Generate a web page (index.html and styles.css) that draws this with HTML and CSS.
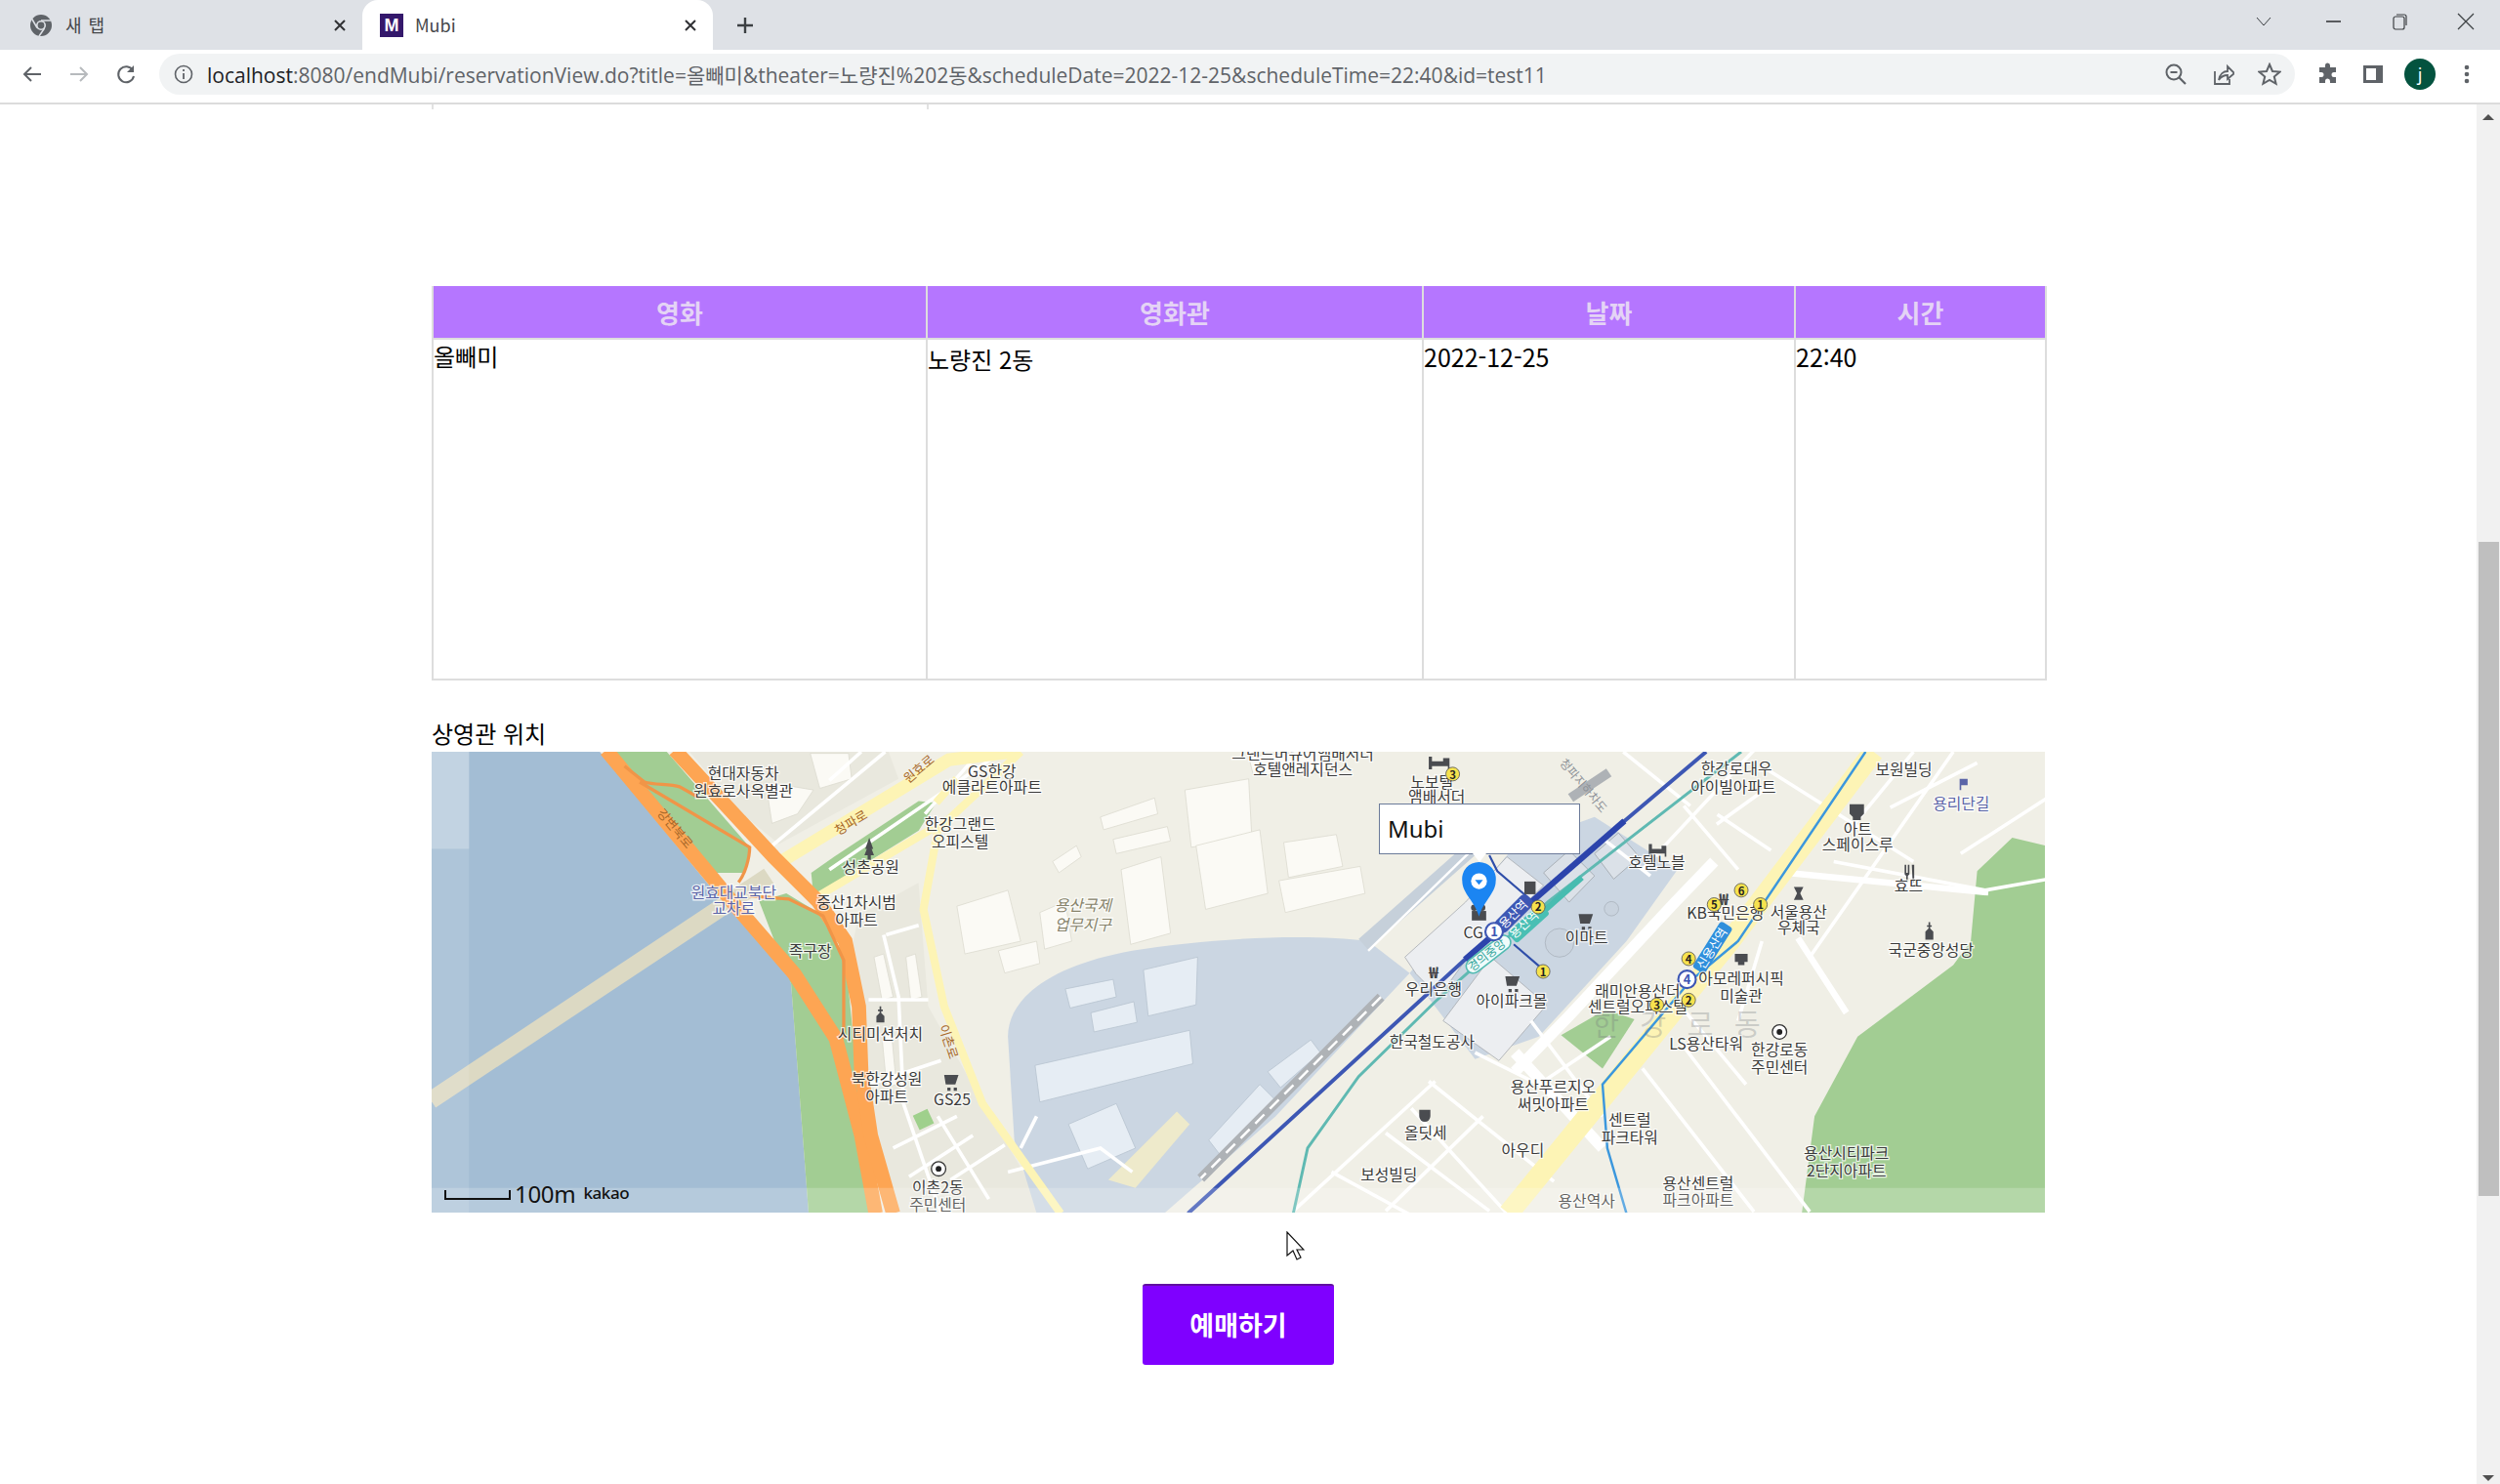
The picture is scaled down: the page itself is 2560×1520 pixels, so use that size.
FILE: index.html
```html
<!DOCTYPE html>
<html lang="ko">
<head>
<meta charset="utf-8">
<title>Mubi</title>
<link rel="stylesheet" href="styles.css">
</head>
<body>
<div class="browser">
  <header class="tabstrip">
    <div class="tab">
      <svg class="favicon" viewBox="0 0 24 24"><circle cx="12" cy="12" r="11" fill="#5f6368"/><circle cx="12" cy="12" r="5" fill="#dee1e6"/><circle cx="12" cy="12" r="3.400" fill="#5f6368"/><path d="M12 7h10M8 14.500 2.800 5.500M15.500 15 10 23" stroke="#dee1e6" stroke-width="1.500" fill="none"/></svg>
      <span class="tab-title tab-title-wide">새 탭</span>
      <svg class="tab-x" viewBox="0 0 14 14"><path d="M2 2l10 10M12 2 2 12" stroke="#303134" stroke-width="2"/></svg>
    </div>
    <div class="tab tab-active">
      <span class="mubi-icon">M</span>
      <span class="tab-title">Mubi</span>
      <svg class="tab-x" viewBox="0 0 14 14"><path d="M2 2l10 10M12 2 2 12" stroke="#303134" stroke-width="2"/></svg>
    </div>
    <svg class="new-tab" viewBox="0 0 20 20"><path d="M10 2v16M2 10h16" stroke="#3c4043" stroke-width="2.400"/></svg>
    <div class="win-controls">
      <svg class="win-btn win-chevron" viewBox="0 0 20 20"><path d="M3 6l7 8 7-8" stroke="#3c4043" fill="none"/></svg>
      <svg class="win-btn" viewBox="0 0 20 20"><path d="M3 10h15" stroke="#202124" stroke-width="1.400"/></svg>
      <svg class="win-btn" viewBox="0 0 20 20"><rect x="4" y="5" width="11" height="13" rx="2" fill="none" stroke="#3c4043" stroke-width="1.200"/><path d="M7 3h8a2 2 0 0 1 2 2v9" fill="none" stroke="#3c4043" stroke-width="1.200"/></svg>
      <svg class="win-btn" viewBox="0 0 20 20"><path d="M2 2l16 16M18 2 2 18" stroke="#3c4043" stroke-width="1.200"/></svg>
    </div>
  </header>
  <nav class="toolbar">
    <svg class="nav-btn" viewBox="0 0 24 24"><path d="M21 12H4M11 5l-7 7 7 7" stroke="#5f6368" stroke-width="2" fill="none"/></svg>
    <svg class="nav-btn" viewBox="0 0 24 24"><path d="M3 12h17M13 5l7 7-7 7" stroke="#b7babd" stroke-width="2" fill="none"/></svg>
    <svg class="nav-btn" viewBox="0 0 24 24"><path d="M19 8a8 8 0 1 0 1 6" stroke="#5f6368" stroke-width="2" fill="none"/><path d="M20 3v7h-7z" fill="#5f6368"/></svg>
    <div class="omnibox">
      <svg class="info-icon" viewBox="0 0 20 20"><circle cx="10" cy="10" r="8.500" fill="none" stroke="#5f6368" stroke-width="1.600"/><path d="M10 9v6M10 5v2" stroke="#5f6368" stroke-width="1.800"/></svg>
      <span class="url"><b class="url-host">localhost</b>:8080/endMubi/reservationView.do?title=올빼미&amp;theater=노량진%202동&amp;scheduleDate=2022-12-25&amp;scheduleTime=22:40&amp;id=test11</span>
      <div class="omni-actions">
        <svg class="omni-btn" viewBox="0 0 24 24"><circle cx="10" cy="10" r="7.500" fill="none" stroke="#5f6368" stroke-width="2"/><path d="M6.500 10h7M15.500 15.500 22 22" stroke="#5f6368" stroke-width="2.200"/></svg>
        <svg class="omni-btn" viewBox="0 0 24 24"><path d="M4 9v13h15v-5M8 18c1-6 5-9 9-9V4l7 7-7 6v-4c-4 0-7 2-9 5z" fill="none" stroke="#5f6368" stroke-width="1.800"/></svg>
        <svg class="omni-btn" viewBox="0 0 24 24"><path d="M12 2l3 7 7.500.6-5.700 4.900 1.800 7.300L12 18l-6.600 3.800 1.800-7.300L1.500 9.600 9 9z" fill="none" stroke="#5f6368" stroke-width="2"/></svg>
      </div>
    </div>
    <div class="tool-actions">
      <svg class="nav-btn" viewBox="0 0 24 24"><path d="M9 3a2.500 2.500 0 0 1 5 0v2h6v5h-2a2.500 2.500 0 0 0 0 5h2v6h-6v-2a2.500 2.500 0 0 0-5 0v2H3v-6h2a2.500 2.500 0 0 0 0-5H3V5h6z" fill="#5f6368"/></svg>
      <svg class="nav-btn" viewBox="0 0 24 24"><rect x="2" y="3" width="20" height="18" fill="#5f6368"/><rect x="5" y="6" width="10" height="12" fill="#fff"/></svg>
      <span class="avatar">j</span>
      <svg class="nav-btn" viewBox="0 0 24 24"><circle cx="12" cy="5" r="2.300" fill="#5f6368"/><circle cx="12" cy="12" r="2.300" fill="#5f6368"/><circle cx="12" cy="19" r="2.300" fill="#5f6368"/></svg>
    </div>
  </nav>
  <div class="viewport">
    <main class="page">
      <div class="content">
        <div class="scrolled-table"><span></span><span></span></div>
        <table class="summary">
          <thead>
            <tr><th class="c1">영화</th><th class="c2">영화관</th><th class="c3">날짜</th><th class="c4">시간</th></tr>
          </thead>
          <tbody>
            <tr><td>올빼미</td><td class="low">노량진 2동</td><td class="num">2022-12-25</td><td class="num">22:40</td></tr>
          </tbody>
        </table>
        <p class="map-title">상영관 위치</p>
        <div class="map">
          <svg class="map-svg" viewBox="270.500 471 1012 289.500" preserveAspectRatio="none">
            <rect class="land" x="270" y="471" width="1013" height="290"/>
            <!-- water -->
            <path class="water" d="M270 471H376L457 570 494 610 496 617 507 761H270z"/>
            <!-- built-up blocks -->
            <polygon class="block" points="432,470.600 557,470.600 563.400,488 488.400,529 463.400,508.400"/>
            <polygon class="block" points="538.400,573.700 575.900,553.300 582,631 616.500,692 657,761 557,761 538.400,671.700 535,590"/>
            <!-- parks -->
            <path class="park" d="M385 471H418L470 531 467 547H447z"/>
            <path class="park" d="M476 565 493 560 513 572 530 600 535 650 540 710 546 761H507L496 617z"/>
            <path class="park" d="M508.600 547 523 537 576 502 587 503 576 520.500 510 561.500z"/>
            <path class="park" d="M1283 530 1262 525 1240 546 1236 590 1225 605 1165 650 1138 700 1130 761H1283z"/>
            <path class="park" d="M979 649 1007 633 1025 639 1005 670z"/>
            <rect class="bld-green" x="574" y="697" width="10" height="10" transform="rotate(-25 579 702)"/>
            <rect class="bld-green" x="702" y="730" width="12" height="10" transform="rotate(-35 708 735)"/>
            <!-- railyard -->
            <path class="yard" d="M632 650C632 625 660 605 710 596 760 588 820 585 858 590L884 610 800 700 730 761H650L636 715z"/>
            <path class="yard" d="M884 610 950 530 1000 512 1052 545 1020 590 965 650 925 664z"/>
            <path class="track-band" d="M925 530 855 592"/>
            <path class="track-edge" d="M932 524 858 596"/>
            <!-- station complex -->
            <polygon class="complex" points="881,600 919,565.500 945,537 968,555 947,576 919,602 902.400,625 888,610.500"/>
            <polygon class="complex" points="905,640 935,600 970,630 940,665"/>
            <polygon class="complex-dark" points="968,547 984,533 1000,549 984,565.500"/>
            <polygon class="complex-dark" points="1000,535 1015,522 1028,537 1012,551"/>
            <circle class="complex-round" cx="978" cy="591" r="9"/>
            <circle class="complex-round" cx="1010.600" cy="569.600" r="4.500"/>
            <!-- buildings -->
            <g class="bld">
              <polygon points="743,495 783,488 785,525 747,531"/>
              <polygon points="750,530 790,520 795,560 756,570"/>
              <polygon points="703,545 728,537 734,585 709,592"/>
              <polygon points="805,528 838,523 842,543 808,550"/>
              <polygon points="802,552 853,543 856,560 806,572"/>
              <polygon points="600,568 632,558 640,590 605,598"/>
              <polygon points="626,596 650,590 652,604 630,610"/>
              <polygon points="690,512 724,500 726,510 692,520"/>
              <polygon points="698,526 732,518 734,527 700,535"/>
              <polygon points="783,474 830,470 832,484 786,486"/>
              <polygon points="660,540 675,530 678,537 664,547"/>
              <polygon points="652,572 668,565 672,590 655,595"/>
              <polygon points="508,472 532,472 534,488 514,494"/>
              <polygon points="480,490 510,495 500,510 484,516"/>
              <polygon points="548,600 554,598 560,625 553,627"/>
              <polygon points="568,600 574,598 578,625 571,627"/>
              <polygon points="553,650 559,648 562,680 556,682"/>
            </g>
            <g class="bld-yard">
              <polygon points="668,620 698,614 700,625 671,632"/>
              <polygon points="717,608 751,600 750,630 720,637"/>
              <polygon points="684,635 711,628 713,641 686,647"/>
              <polygon points="649,668 746,646 748,667 652,691"/>
              <polygon points="670,705 700,692 712,720 682,733"/>
              <polygon points="758,715 790,680 800,690 768,728"/>
              <polygon points="795,672 822,652 828,660 803,682"/>
            </g>
            <polygon class="tan" points="695,740 738,697 746,705 712,745"/>
            <!-- streets -->
            <g class="street">
              <path d="M555 471 478 535M628 471 520 545M540 471 520 489M580 510 610 476"/>
              <path d="M554 586 563.400 625 566.500 692 590 761M544.600 626.800H582M555.600 586 576 580"/>
              <path d="M545 680 590 665M588 700 620 752M560 720 600 700M570 738 610 712M596 740 630 718"/>
              <path d="M632 735 690 720 710 735M640 720 650 700"/>
              <path d="M1018 471 1060 505M1004.500 525 1035 549"/>
              <path d="M925 660 965 680 1010 650M960 640 1005 700"/>
              <path d="M896 678 974.500 741M869 710.500 934 759.500M900 678 811 759.500M930 700 869 759.500M835 735 890 765M885 695 945 761"/>
              <path d="M1077 510.400 1110.600 533M1110.600 492 1076.600 516.500M1175 478 1134.400 527M1100 470 1030 545M1056 505 1090 545"/>
              <path d="M1240 478 1185.500 506M1284 500 1229.700 535M1150 540 1245 558 1290 550M1225 471 1135 600"/>
              <path d="M1105 480 1200 540M1200 471 1160 520M1105 590 1090 640"/>
              <path d="M1055 655 1135 760M1045 620 1095 680M1030 670 1100 760"/>
            </g>
            <g class="street-wide">
              <path d="M1075 540 1050 566 984 637 950 672M950 660 1005 720"/>
              <path class="street-mid" d="M1120.800 547 1247 559.400M1127.600 588 1158 635"/>
            </g>
            <!-- rails -->
            <path class="rail-grey" d="M1009 484 985 500M866 625 753 739"/>
            <path class="rail-dash" d="M866 625 753 739"/>
            <!-- arterial yellow -->
            <path class="yellow" d="M640 471 588 520 579 570 592 631 616 692 665 761"/>
            <path class="yellow" d="M510 563.500 585 519M587 503 600 488"/>
            <path class="yellow-wide" d="M1175 471 1085 590 1020 670 946 761"/>
            <path class="bridge" d="M270 690 482 549"/>
            <path class="yellow-mid" d="M488 541 595 476 636 471"/>
            <!-- orange -->
            <path class="orange" d="M380 470 463 570 498 610.500 524 651 540 712 549 761"/>
            <path class="orange" d="M423 470 485 537 513 565 530 590 538.500 631 540 672 546 712 560 761"/>
            <path class="orange-thin" d="M391.500 480 404 490C410 492 420 491 426 493L438.500 500M401 490 470 531C470 538 467 548 463 553"/>
            <path class="orange-thin" d="M470 561.500 494.500 563.500 516 574 529 602V651"/>
            <!-- transit -->
            <path class="line-blue" d="M1070 471 1018.700 514.500 918.700 601.500 745 761"/>
            <path class="line-blue-strong" d="M1018.700 514.500 918.700 601.500"/>
            <path class="line-teal" d="M1092 471 971 565 900 628 852 675 820 720 811 761"/>
            <path class="line-teal-strong" d="M992 550 958 580"/>
            <path class="line-sub" d="M1170 471 1090 590 1060 615 1005 680 1008 720 1020 761"/>
            <path class="line-exit" d="M934 536 939 546 961.600 565.500M949.300 592 965.600 606"/>
            <!-- station labels -->
            <rect class="pill-teal-solid" x="-14" y="-4.500" width="28" height="9" rx="2" transform="translate(958.600 578.800) rotate(-42)"/>
            <text class="pill-text" transform="translate(957.500 581.500) rotate(-42)">용산역</text>
            <rect class="pill-blue" x="-14" y="-4.800" width="28" height="9.600" rx="3" transform="translate(949.400 572.700) rotate(-45)"/>
            <text class="pill-text" transform="translate(951 575) rotate(-45)">용산역</text>
            <rect class="pill-teal" x="-16.500" y="-4.500" width="33" height="9" rx="4.500" transform="translate(933.400 598.200) rotate(-38)"/>
            <text class="pill-text-teal" transform="translate(934 600.800) rotate(-38)">경의중앙</text>
            <rect class="pill-sky" x="-17" y="-4.500" width="34" height="9" rx="2" transform="translate(1074 594) rotate(-58)"/>
            <text class="pill-text" transform="translate(1076 596) rotate(-58)">신용산역</text>
            <circle class="badge-ring" cx="937" cy="584" r="5.500"/><text class="badge-line" x="937" y="587">1</text>
            <circle class="badge-ring" cx="1058" cy="614" r="5.500"/><text class="badge-line" x="1058" y="617">4</text>
            <!-- POI glyphs -->
            <g class="poi">
              <path d="M896 474h2v3h7v-2h4v7h-1v-2h-10v2h-2z"/>
              <path d="M1034 529h2v3h6v-2h3v7h-1v-2h-8v2h-2z"/>
              <path d="M1160 504h9v6l-2 2v2h-5v-2l-2-2z"/>
              <path d="M1194.500 542h1v5h1v-5h1v6l-1 1v4h-1v-4l-1-1zM1199 542h1.500v11h-1z"/>
              <path d="M1125 556h6l-2 4 2 4h-6l2-4z"/>
              <path d="M1209.500 578h1v2h1v1h-1v1l2 2v5h-5v-5l2-2v-1h-1v-1h1z"/>
              <path d="M1088 598h8v5h-2v2h-4v-2h-2z"/>
              <path d="M890 696h7v4a3 3 0 0 1-7 0z"/>
              <path d="M551.500 631h1v2h1v1h-1v1l2 2v4h-5v-4l2-2v-1h-1v-1h1z"/>
              <path d="M545 525l2.500 7h-1l1.500 4h-2v3h-2v-3h-2l1.500-4h-1z"/>
              <path d="M592 674h9l-2 6h-6zM594 682h2v2h-2zM598 682h2v2h-2z"/>
              <path d="M990 573h9l-2 6h-6zM992 581h2v2h-2zM996 581h2v2h-2z"/>
              <path d="M944 612h9l-2 6h-6zM946 620h2v2h-2zM950 620h2v2h-2z"/>
              <path d="M923 571h9v6h-9z"/>
              <circle cx="924.500" cy="569" r="2"/><circle cx="929.500" cy="569" r="2"/>
              <path d="M956 552.500h7v8h-7z"/>
            </g>
            <text class="won" x="899" y="613">₩</text>
            <text class="won" x="1081" y="567">₩</text>
            <circle class="target" cx="588.500" cy="733" r="4.500"/><circle class="target-dot" cx="588.500" cy="733" r="1.800"/>
            <circle class="target" cx="1116" cy="647" r="4.500"/><circle class="target-dot" cx="1116" cy="647" r="1.800"/>
            <!-- road names -->
            <text class="road-name" transform="translate(421 521) rotate(50)">강변북로</text>
            <text class="road-name" transform="translate(535 518) rotate(-31)">청파로</text>
            <text class="road-name" transform="translate(578 484) rotate(-40)">원효로</text>
            <text class="road-name" transform="translate(592 654) rotate(72)">이촌로</text>
            <text class="rail-name" transform="translate(991 494) rotate(50)">청파지하차도</text>
            <!-- labels -->
            <text class="lbl-dong" x="1058" y="649">한강로동</text>
            <g class="lbl">
              <text x="466" y="488">현대자동차</text><text x="466" y="499">원효로사옥별관</text>
              <text x="622" y="487">GS한강</text><text x="622" y="497">에클라트아파트</text>
              <text x="602" y="520">한강그랜드</text><text x="602" y="531">오피스텔</text>
              <text x="546" y="547">성촌공원</text>
              <text x="537" y="569">중산1차시범</text><text x="537" y="580">아파트</text>
              <text x="508" y="600">족구장</text>
              <text x="552" y="652">시티미션처치</text>
              <text x="556" y="680">북한강성원</text><text x="556" y="691">아파트</text>
              <text x="597" y="693">GS25</text>
              <text x="588" y="748">이촌2동</text><text x="588" y="759">주민센터</text>
              <text x="817" y="476">그랜드머큐어앰배서더</text><text x="817" y="486">호텔앤레지던스</text>
              <text x="898" y="494">노보텔</text><text x="901" y="503">앰배서더</text>
              <text x="1089" y="485">한강로대우</text><text x="1087" y="497">아이빌아파트</text>
              <text x="1194" y="486">보원빌딩</text>
              <text x="1165" y="523">아트</text><text x="1165" y="533">스페이스루</text>
              <text x="1039" y="544">호텔노블</text>
              <text x="1197" y="559">효뜨</text>
              <text x="1128" y="575">서울용산</text><text x="1128" y="585">우체국</text>
              <text x="1082" y="576">KB국민은행</text>
              <text x="1211" y="599">국군중앙성당</text>
              <text x="995" y="591">이마트</text>
              <text x="924" y="588">CG</text>
              <text x="899" y="624">우리은행</text>
              <text x="948" y="631">아이파크몰</text>
              <text x="1027" y="625">래미안용산더</text><text x="1027" y="635">센트럴오피스텔</text>
              <text x="1092" y="617">아모레퍼시픽</text><text x="1092" y="628">미술관</text>
              <text x="1070" y="658">LS용산타워</text>
              <text x="1116" y="662">한강로동</text><text x="1116" y="673">주민센터</text>
              <text x="898" y="657">한국철도공사</text>
              <text x="974" y="685">용산푸르지오</text><text x="974" y="696">써밋아파트</text>
              <text x="1022" y="706">센트럴</text><text x="1022" y="717">파크타워</text>
              <text x="894" y="714">올딧세</text>
              <text x="955" y="725">아우디</text>
              <text x="871" y="740">보성빌딩</text>
              <text x="1158" y="727">용산시티파크</text><text x="1158" y="738">2단지아파트</text>
              <text x="1065" y="746">용산센트럴</text><text x="1065" y="756">파크아파트</text>
              <text x="995" y="757">용산역사</text>
            </g>
            <g class="lbl lbl-blue">
              <text x="460" y="563">원효대교북단</text><text x="460" y="573">교차로</text>
              <text x="1230" y="507">용리단길</text>
            </g>
            <g class="lbl lbl-area">
              <text x="679" y="571">용산국제</text><text x="679" y="583">업무지구</text>
            </g>
            <path class="flag" d="M1229 495v-7h5v4h-4v3z"/>
            <!-- exits -->
            <g class="exit">
              <circle cx="911" cy="485" r="4.300"/><circle cx="964.600" cy="568.500" r="4.300"/><circle cx="967.700" cy="609" r="4.300"/>
              <circle cx="1092" cy="558" r="4.300"/><circle cx="1075" cy="567" r="4.300"/><circle cx="1104" cy="567" r="4.300"/>
              <circle cx="1059" cy="601" r="4.300"/><circle cx="1039" cy="630" r="4.300"/><circle cx="1059" cy="627" r="4.300"/>
            </g>
            <g class="exit-num">
              <text x="911" y="488">3</text><text x="964.600" y="571">2</text><text x="967.700" y="612">1</text>
              <text x="1092" y="561">6</text><text x="1075" y="570">5</text><text x="1104" y="570">1</text>
              <text x="1059" y="604">4</text><text x="1039" y="633">3</text><text x="1059" y="630">2</text>
            </g>
            <!-- marker -->
            <path class="pin" d="M927.500 574.500C925 565 917 560 917 552.300A10.600 10.600 0 1 1 938 552.300C938 560 930 565 927.500 574.500z"/>
            <circle class="pin-hole" cx="927.500" cy="552.300" r="5"/>
            <path class="pin-mark" d="M925 551.500h5L927.500 554.500z"/>
            <!-- tile fades -->
            <rect class="fade" x="270.500" y="471" width="23.500" height="290"/>
            <rect class="fade-soft" x="270.500" y="471" width="23.500" height="61"/>
            <rect class="fade-bottom" x="270.500" y="745" width="1012" height="16"/>
          </svg>
          <div class="info-window">Mubi</div>
          <div class="scale">
            <span class="scale-bar"></span>
            <span class="scale-text">100m</span>
            <span class="kakao">kakao</span>
          </div>
        </div>
        <div class="actions"><button class="reserve" type="button">예매하기</button></div>
      </div>
    </main>
    <aside class="scrollbar">
      <span class="arrow-up"></span>
      <span class="thumb"></span>
      <span class="arrow-down"></span>
    </aside>
    <svg class="cursor" viewBox="0 0 20 30"><path d="M2 1v24l6-5 4 9 4-2-4-8h7z" fill="#fff" stroke="#111" stroke-width="1.200"/></svg>
  </div>
</div>
</body>
</html>
```
FILE: styles.css
```css
* { box-sizing: border-box; }
html, body { margin: 0; height: 100%; overflow: hidden; background: #fff; }
body { font-family: "Noto Sans CJK KR", "Noto Sans", sans-serif; color: #000; }
.browser { display: flex; flex-direction: column; height: 1520px; }

/* tab strip */
.tabstrip { display: flex; align-items: stretch; height: 51px; background: #dee1e6; flex: none; }
.tab { display: flex; align-items: center; width: 371px; padding: 0 16px 0 30px; gap: 13px; }
.tab-active { width: 359px; padding: 0 16px 0 18px; background: #fff; border-radius: 16px 16px 0 0; gap: 12px; }
.favicon { width: 24px; height: 24px; flex: none; }
.mubi-icon { width: 24px; height: 24px; flex: none; background: #34186b; color: #fff; font: 700 18px/24px "Liberation Sans", sans-serif; text-align: center; }
.tab-title { flex: 1; padding-bottom: 2px; font: 18px "Noto Sans CJK KR", "Liberation Sans", sans-serif; color: #45474a; }
.tab-title-wide { letter-spacing: 1px; }
.tab-x { width: 14px; height: 14px; flex: none; }
.new-tab { width: 20px; height: 20px; align-self: center; margin-left: 23px; flex: none; }
.win-controls { margin-left: auto; display: flex; align-items: center; gap: 48px; padding: 0 25px 8px 0; }
.win-btn { width: 20px; height: 20px; flex: none; }
.win-chevron { margin-right: 3px; }

/* toolbar */
.toolbar { display: flex; align-items: center; height: 56px; padding: 0 0 4px 21px; gap: 24px; background: #fff; border-bottom: 2px solid #dcdcdc; flex: none; }
.nav-btn { width: 24px; height: 24px; flex: none; }
.omnibox { display: flex; align-items: center; height: 42px; width: 2187px; margin-left: -2px; padding: 0 14px 0 15px; background: #f1f3f4; border-radius: 21px; flex: none; }
.info-icon { width: 20px; height: 20px; flex: none; margin-right: 14px; }
.url { font: 21px "Open Sans", "Noto Sans CJK KR", sans-serif; color: #5f6368; white-space: nowrap; }
.url-host { font-weight: 400; color: #202124; }
.omni-actions { margin-left: auto; display: flex; align-items: center; gap: 24px; }
.omni-btn { width: 24px; height: 24px; flex: none; }
.tool-actions { display: flex; align-items: center; gap: 22px; margin-left: -2px; }
.avatar { width: 32px; height: 32px; margin: 0 -2px; border-radius: 50%; background: #04533f; color: #fff; font: 18px/32px "Noto Sans", sans-serif; text-align: center; flex: none; }

/* page */
.viewport { position: relative; flex: 1; display: flex; min-height: 0; }
.page { flex: 1; min-width: 0; overflow: hidden; }
.content { width: 1652px; margin: 0 auto; }
.scrolled-table { display: grid; grid-template-columns: 507px 507px; height: 5px; margin-bottom: 181px; }
.scrolled-table span { border-left: 2px solid #e2e2e2; }

.summary { width: 1652px; height: 404px; border-collapse: collapse; table-layout: fixed; font-size: 24px; }
.summary th { height: 54px; padding: 0; background: #b576ff; color: #e4d3f5; font-size: 26px; font-weight: 700; border: 2px solid #ddd; border-top: 0; }
.summary td { padding: 0; vertical-align: top; border: 2px solid #ddd; line-height: 34px; }
.summary td.low { padding-top: 3px; }
.summary td.num { font-size: 25px; }
.c1 { width: 506px; }
.c2 { width: 508px; }
.c3 { width: 381px; }
.c4 { width: 257px; }

.map-title { margin: 35px 0 0; font-size: 24px; line-height: 38px; }
.map { position: relative; height: 472px; overflow: hidden; }
.map-svg { display: block; width: 100%; height: 100%; }

.land { fill: #f0efe6; }
.block { fill: #e9e8de; }
.water { fill: #a3bdd4; }
.park { fill: #a2cd93; }
.bld-green { fill: #9fd08c; }
.yard { fill: #cbd6e2; }
.track-band { fill: none; stroke: #c6d0da; stroke-width: 9; }
.track-edge { fill: none; stroke: #fff; stroke-width: 1.500; }
.complex { fill: #eceef1; stroke: #a9adb2; stroke-width: .5; }
.complex-dark { fill: #dbe1e8; stroke: #a0a6ad; stroke-width: .5; }
.complex-round { fill: #c9d3de; stroke: #aab3bd; stroke-width: .5; }
.bld polygon { fill: #fbfaf5; stroke: #dcdbd0; stroke-width: .5; }
.bld-yard polygon { fill: #e6edf4; stroke: #b8c4d0; stroke-width: .5; }
.tan { fill: #eeeacb; }
.street path { fill: none; stroke: #fff; stroke-width: 2.200; }
.street-wide path { fill: none; stroke: #fff; stroke-width: 7; }
.street-wide .street-mid { stroke-width: 4; }
.rail-grey { fill: none; stroke: #aeb2b6; stroke-width: 6; }
.rail-dash { fill: none; stroke: #fff; stroke-width: 1.500; stroke-dasharray: 8 5; }
.yellow { fill: none; stroke: #fdf4b5; stroke-width: 5; }
.yellow-mid { fill: none; stroke: #fdf4b5; stroke-width: 8; }
.yellow-wide { fill: none; stroke: #fdf4b5; stroke-width: 13; }
.bridge { fill: none; stroke: #dcd9c3; stroke-width: 11; }
.orange { fill: none; stroke: #fda553; stroke-width: 9; }
.orange-thin { fill: none; stroke: #f09548; stroke-width: 2; }
.line-blue { fill: none; stroke: #3d57b4; stroke-width: 2.400; }
.line-blue-strong { fill: none; stroke: #2c44ac; stroke-width: 3.800; }
.line-teal { fill: none; stroke: #5fb9b2; stroke-width: 1.800; }
.line-teal-strong { fill: none; stroke: #47bcb0; stroke-width: 3.800; }
.line-sub { fill: none; stroke: #3b97dd; stroke-width: 1.500; }
.line-exit { fill: none; stroke: #2f4ea9; stroke-width: 1.300; }
.pill-blue { fill: #3d57b4; }
.pill-sky { fill: #2f8fdc; }
.pill-teal { fill: #f0fbfa; stroke: #52bbb2; stroke-width: 1; }
.pill-teal-solid { fill: #49bfb4; }
.pill-text { fill: #fff; font-size: 7.800px; text-anchor: middle; }
.pill-text-teal { fill: #35a69c; font-size: 7.500px; text-anchor: middle; }
.badge-ring { fill: #fff; stroke: #3d57b4; stroke-width: 1.300; }
.badge-line { fill: #3d57b4; font-size: 8px; font-weight: 700; text-anchor: middle; }
.poi path, .poi circle { fill: #4a4c50; }
.flag { fill: #5b65a8; }
.won { fill: #3f4144; font-size: 10px; font-weight: 700; text-anchor: middle; }
.target { fill: #fff; stroke: #333; stroke-width: .8; }
.target-dot { fill: #222; }
.road-name { fill: #a8692a; font-size: 8px; text-anchor: middle; }
.rail-name { fill: #8d9197; font-size: 7.500px; text-anchor: middle; }
.lbl text { fill: #3a3a3a; font-size: 9.700px; text-anchor: middle; stroke: rgba(255, 255, 255, .75); stroke-width: 1.600; paint-order: stroke; }
.lbl-blue text { fill: #5b65a8; }
.lbl-area text { fill: #87836b; font-style: italic; }
.lbl-dong { fill: rgba(110, 115, 120, .28); font-size: 18px; text-anchor: middle; letter-spacing: 13px; }
.exit circle { fill: #f6e24e; stroke: #555; stroke-width: .5; }
.exit-num text { fill: #222; font-size: 7px; font-weight: 700; text-anchor: middle; }
.pin { fill: #1b85f2; }
.pin-hole { fill: #fff; }
.pin-mark { fill: #1b85f2; }
.fade { fill: rgba(255, 255, 255, .12); }
.fade-soft { fill: rgba(255, 255, 255, .25); }
.fade-bottom { fill: rgba(255, 255, 255, .2); }

.info-window { position: absolute; left: 970px; top: 53px; width: 206px; height: 52px; padding-left: 8px; background: #fff; border: 1px solid #6b7a99; font: 24px/50px "Noto Sans", sans-serif; color: #111; }
.info-window::after { content: ""; position: absolute; left: 95px; top: 50px; border: 7px solid transparent; border-top: 9px solid #fff; }

.scale { position: absolute; left: 13px; bottom: 4px; display: flex; align-items: flex-end; }
.scale-bar { width: 68px; height: 10px; margin-bottom: 9px; border: 2px solid #111; border-top: 0; }
.scale-text { margin-left: 4px; font: 24px/30px "Noto Sans", sans-serif; color: #111; letter-spacing: -.3px; }
.kakao { margin: 0 0 6px 8px; font: 500 17px/20px "Noto Sans", sans-serif; color: #111; letter-spacing: -.4px; }

.actions { display: flex; justify-content: center; padding-top: 73px; }
.reserve { width: 196px; height: 83px; padding: 0 0 3px; background: #7f00ff; color: #fff; border: 0; border-top: 2px solid #60109f; border-radius: 3px; font: 700 27px "Noto Sans CJK KR", sans-serif; }

/* scrollbar */
.scrollbar { position: relative; width: 24px; background: #f1f1f1; flex: none; }
.thumb { position: absolute; left: 2px; right: 1px; top: 448px; height: 670px; background: #bfbfbf; }
.arrow-up, .arrow-down { position: absolute; left: 6px; border-left: 6px solid transparent; border-right: 6px solid transparent; }
.arrow-up { top: 10px; border-bottom: 6px solid #505050; }
.arrow-down { bottom: 3px; border-top: 6px solid #505050; }

.cursor { position: absolute; left: 1316px; top: 1154px; width: 20px; height: 30px; }
```
